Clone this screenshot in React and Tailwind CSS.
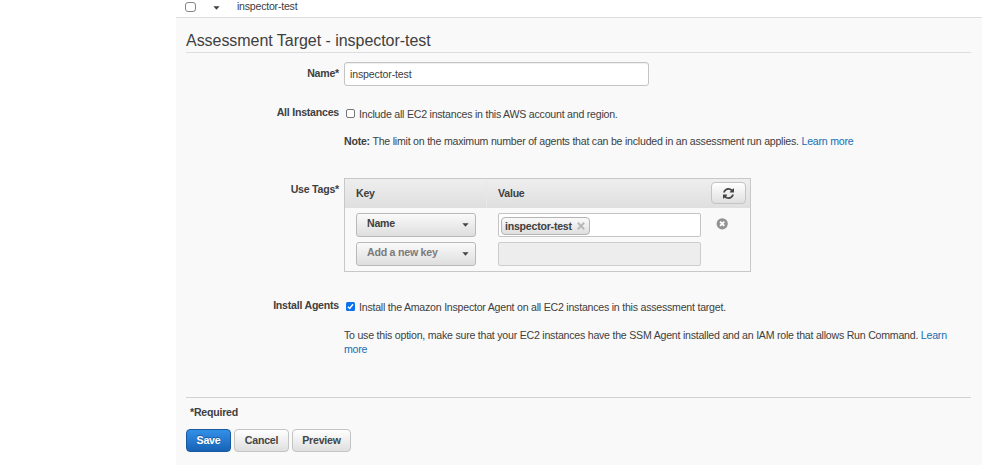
import React from "react";

function Caret({ className = "" }) {
  return (
    <svg width="7" height="4" viewBox="0 0 7 4" className={className} fill="currentColor">
      <path d="M0.4 0.2H6.6L3.5 3.8Z" />
    </svg>
  );
}

function Field({ label, labelClass, className, children }) {
  return (
    <div className={`flex ${className}`}>
      <div className={`w-[153px] shrink-0 text-right font-bold ${labelClass}`}>{label}</div>
      <div className="ml-[5px] min-w-0 flex-1">{children}</div>
    </div>
  );
}

function KeySelect({ label, className }) {
  return (
    <div
      className={`flex h-6 w-30 items-center justify-between rounded-[3px] border border-[#b9b9b9] bg-linear-to-b from-[#fafafa] to-[#dedede] pr-[6px] pl-2.5 font-bold ${className}`}
    >
      <span className="-mt-1">{label}</span>
      <Caret className="text-[#444]" />
    </div>
  );
}

function Button({ children, className }) {
  return (
    <button className={`flex items-center justify-center rounded-[4px] border font-bold tracking-[-0.22px] ${className}`}>
      {children}
    </button>
  );
}

const plain = "border-[#c4c4c4] bg-linear-to-b from-white to-[#dfdfdf] text-[#444]";

export default function App() {
  return (
    <div className="h-[466px] w-[1000px] overflow-hidden bg-white pl-[176px] font-['Liberation_Sans',Arial,sans-serif] text-[10.6px] leading-[14px] tracking-[-0.23px] whitespace-nowrap text-[#404040]">
      <div className="flex h-[17px] w-[806px]">
        <span className="mt-[2px] ml-[9px] h-[10px] w-[11px] rounded-[3px] border border-[#858585] bg-white" />
        <Caret className="mt-[6px] ml-[17px]" />
        <span className="-mt-[1px] ml-[17px]">inspector-test</span>
      </div>
      <div className="h-[448px] w-[806px] border-t border-[#dedede] bg-[#f9f9f9] pr-[11px] pl-[10px]">
        <h1 className="h-[35px] border-b border-[#dedede] pt-[12px] text-[16px] leading-[21px] tracking-[-0.04px]">
          Assessment Target - inspector-test
        </h1>

        <Field label="Name*" labelClass="pt-[4px]" className="h-[52px] pt-[9px]">
          <div className="flex h-6 w-[305px] items-center rounded-[3px] border border-[#c4c4c4] bg-white pb-px pl-[5px] shadow-[inset_0_1px_1px_#eee] tracking-[-0.15px]">
            inspector-test
          </div>
        </Field>

        <Field label="All Instances" className="h-[73px]">
          <div className="flex h-[29px] pt-[2px]">
            <span className="mt-[2px] ml-[2px] size-[9px] rounded-[2px] border border-[#767676] bg-white" />
            <span className="ml-[4px]">Include all EC2 instances in this AWS account and region.</span>
          </div>
          <p>
            <b>Note:</b> The limit on the maximum number of agents that can be included in an assessment run applies.{" "}
            <a className="text-[#146eb4]">Learn more</a>
          </p>
        </Field>

        <Field label="Use Tags*" labelClass="pt-[4px]" className="h-[120px]">
          <div className="h-[94px] w-[407px] border border-[#c8c8c8]">
            <div className="flex h-[29px] items-center bg-linear-to-b from-[#eee] to-[#dfdfdf] font-bold">
              <div className="flex h-full w-[142px] items-center border-r border-[#e8e8e8] pb-px pl-[11px]">Key</div>
              <div className="w-[224px] pb-px pl-[11px]">Value</div>
              <Button className={`mb-px h-[22px] w-[35px] ${plain}`}>
                <svg width="11" height="11" viewBox="0 0 1536 1536" fill="currentColor">
                  <path d="M1511 928q0 5-1 7-64 268-268 434.500T764 1536q-146 0-282.500-55T238 1324l-129 129q-19 19-45 19t-45-19-19-45V960q0-26 19-45t45-19h448q26 0 45 19t19 45-19 45l-137 137q71 66 161 102t187 36q134 0 250-65t186-179q11-17 53-117 8-23 30-23h192q13 0 22.500 9.500t9.500 22.500zm25-800v448q0 26-19 45t-45 19h-448q-26 0-45-19t-19-45 19-45l138-138Q969 256 768 256q-134 0-250 65T332 500q-11 17-53 117-8 23-30 23H50q-13 0-22.500-9.500T18 608v-7q65-268 270-434.500T768 0q146 0 284 55.500T1297 212l130-129q19-19 45-19t45 19 19 45z" />
                </svg>
              </Button>
            </div>
            <div className="flex pt-[5px] pl-[11px]">
              <div className="flex flex-col gap-[5px]">
                <KeySelect label="Name" />
                <KeySelect label="Add a new key" className="text-[#7a7a7a]" />
              </div>
              <div className="ml-[22px] flex flex-col gap-[5px]">
                <div className="flex h-6 w-[203px] items-center rounded-[2px] border border-[#c4c4c4] bg-white pt-px pl-[2px]">
                  <div className="flex h-[18px] w-[89px] items-center rounded-[4px] border border-[#b4b4b4] bg-linear-to-b from-[#fafafa] to-[#dfdfdf] pl-[3px] font-bold">
                    <span className="w-[72px]">inspector-test</span>
                    <svg width="8" height="8" viewBox="0 0 8 8" stroke="#b8b8b8" strokeWidth="2">
                      <path d="M0.8 0.8L7.2 7.2M7.2 0.8L0.8 7.2" />
                    </svg>
                  </div>
                </div>
                <div className="h-6 w-[203px] rounded-[2px] border border-[#ccc] bg-[#ededed]" />
              </div>
              <svg width="12" height="12" viewBox="0 0 12 12" className="mt-[5px] ml-[15px]">
                <circle cx="6.2" cy="5.8" r="5.6" fill="#929292" />
                <path d="M4.1 3.7L8.3 7.9M8.3 3.7L4.1 7.9" stroke="#fff" strokeWidth="1.9" />
              </svg>
            </div>
          </div>
        </Field>

        <Field label="Install Agents" className="h-[99px]">
          <div className="flex h-[30px] pt-[2px]">
            <svg width="9" height="9" viewBox="0 0 9 9" className="mt-[2px] ml-[2px]">
              <rect width="9" height="9" rx="1.5" fill="#0b72ef" />
              <path d="M1.9 4.7L3.7 6.5L7 2.2" fill="none" stroke="#fff" strokeWidth="1.4" />
            </svg>
            <span className="ml-[4px]">
              Install the Amazon Inspector Agent on all EC2 instances in this assessment target.
            </span>
          </div>
          <p>
            To use this option, make sure that your EC2 instances have the SSM Agent installed and an IAM role that
            allows Run Command.{" "}
            <a className="text-[#146eb4]">
              Learn
              <br />
              more
            </a>
          </p>
        </Field>

        <div className="border-t border-[#d2d2d2] pt-[7px]">
          <p className="h-6 pl-1 font-bold">*Required</p>
          <div className="flex gap-[3px]">
            <Button className="h-[23px] w-[45px] border-[#17599f] bg-linear-to-b from-[#3390e8] to-[#1763b5] pb-px text-white [text-shadow:0_-1px_0_#17599f]">
              Save
            </Button>
            <Button className={`h-[23px] w-[55px] pb-px ${plain}`}>Cancel</Button>
            <Button className={`h-[23px] w-[59px] pb-px ${plain}`}>Preview</Button>
          </div>
        </div>
      </div>
    </div>
  );
}
